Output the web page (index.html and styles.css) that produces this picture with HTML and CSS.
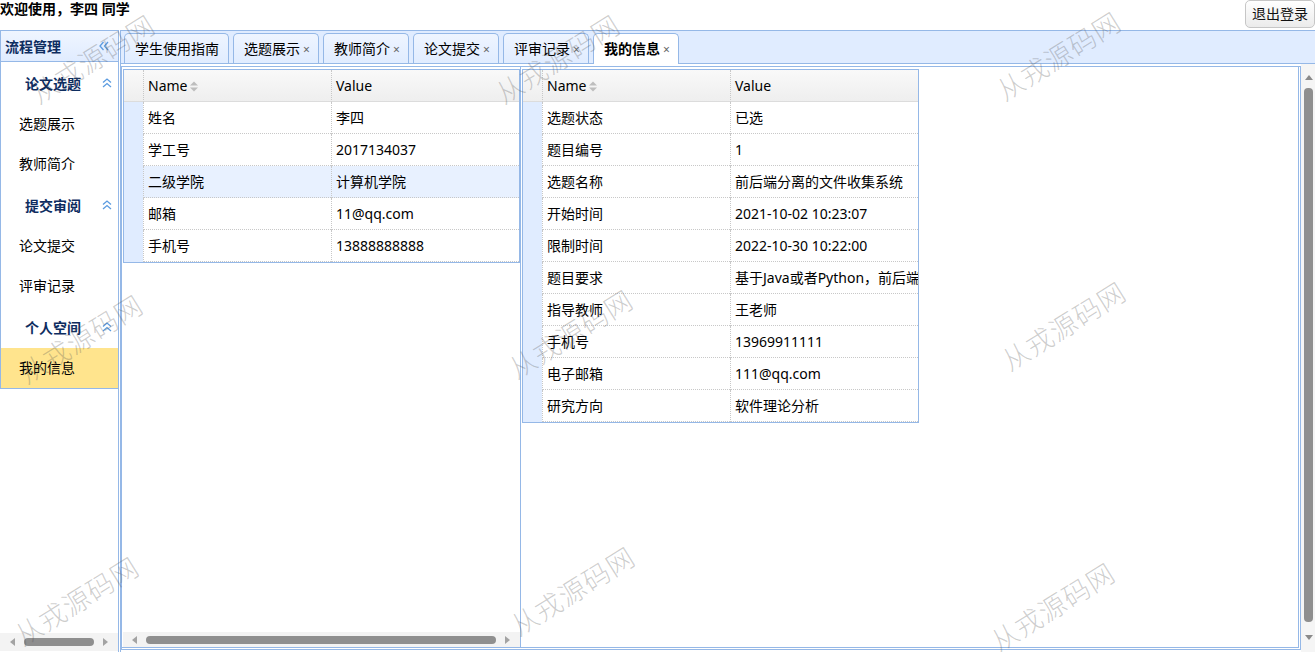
FILE: index.html
```html
<!DOCTYPE html>
<html lang="zh-CN">
<head>
<meta charset="utf-8">
<title>我的信息</title>
<link rel="stylesheet" href="styles.css">
</head>
<body>
<div class="page">
  <header class="topbar">
    <span class="welcome">欢迎使用，李四 同学</span>
    <button class="logout" type="button">退出登录</button>
  </header>
  <main class="main">
    <aside class="west">
      <div class="west-head">
        <span class="west-title">流程管理</span>
        <svg class="chev" width="10" height="10" viewBox="0 0 10 10"><polyline points="4.5,1 1,5 4.5,9" /><polyline points="9,1 5.5,5 9,9" /></svg>
      </div>
      <div class="west-body">
        <div class="accordion">
          <div class="acc-group">
            <div class="acc-head"><span>论文选题</span><svg class="chev" width="10" height="10" viewBox="0 0 10 10"><polyline points="1,4.5 5,1 9,4.5" /><polyline points="1,9 5,5.5 9,9" /></svg></div>
            <div class="acc-item">选题展示</div>
            <div class="acc-item">教师简介</div>
          </div>
          <div class="acc-group">
            <div class="acc-head"><span>提交审阅</span><svg class="chev" width="10" height="10" viewBox="0 0 10 10"><polyline points="1,4.5 5,1 9,4.5" /><polyline points="1,9 5,5.5 9,9" /></svg></div>
            <div class="acc-item">论文提交</div>
            <div class="acc-item">评审记录</div>
          </div>
          <div class="acc-group">
            <div class="acc-head"><span>个人空间</span><svg class="chev" width="10" height="10" viewBox="0 0 10 10"><polyline points="1,4.5 5,1 9,4.5" /><polyline points="1,9 5,5.5 9,9" /></svg></div>
            <div class="acc-item active">我的信息</div>
          </div>
        </div>
        <div class="hscroll west-scroll">
          <svg class="arr" width="5" height="8" viewBox="0 0 5 8"><polygon points="5,0 0,4 5,8" /></svg>
          <div class="thumb-h"></div>
          <svg class="arr" width="5" height="8" viewBox="0 0 5 8"><polygon points="0,0 5,4 0,8" /></svg>
        </div>
      </div>
    </aside>
    <section class="center">
      <nav class="tabs">
        <div class="tab">学生使用指南</div>
        <div class="tab closable">选题展示<span class="x">×</span></div>
        <div class="tab closable">教师简介<span class="x">×</span></div>
        <div class="tab closable">论文提交<span class="x">×</span></div>
        <div class="tab closable">评审记录<span class="x">×</span></div>
        <div class="tab closable selected">我的信息<span class="x">×</span></div>
      </nav>
      <div class="tab-body">
        <div class="frame">
          <div class="layout">
            <div class="pane pane-west">
              <div class="grid">
                <div class="grow ghead"><div class="rn"></div><div class="gc">Name<svg class="sort" width="8" height="11" viewBox="0 0 8 11"><polygon points="0,4.5 4,0.5 8,4.5" /><polygon points="0,6.5 8,6.5 4,10.5" /></svg></div><div class="gc">Value</div></div>
                <div class="grow"><div class="rn"></div><div class="gc">姓名</div><div class="gc">李四</div></div>
                <div class="grow"><div class="rn"></div><div class="gc">学工号</div><div class="gc">2017134037</div></div>
                <div class="grow hl"><div class="rn"></div><div class="gc">二级学院</div><div class="gc">计算机学院</div></div>
                <div class="grow"><div class="rn"></div><div class="gc">邮箱</div><div class="gc">11@qq.com</div></div>
                <div class="grow"><div class="rn"></div><div class="gc">手机号</div><div class="gc">13888888888</div></div>
              </div>
              <div class="hscroll pane-scroll">
                <svg class="arr" width="5" height="8" viewBox="0 0 5 8"><polygon points="5,0 0,4 5,8" /></svg>
                <div class="thumb-h"></div>
                <svg class="arr" width="5" height="8" viewBox="0 0 5 8"><polygon points="0,0 5,4 0,8" /></svg>
              </div>
            </div>
            <div class="pane pane-center">
              <div class="grid">
                <div class="grow ghead"><div class="rn"></div><div class="gc">Name<svg class="sort" width="8" height="11" viewBox="0 0 8 11"><polygon points="0,4.5 4,0.5 8,4.5" /><polygon points="0,6.5 8,6.5 4,10.5" /></svg></div><div class="gc">Value</div></div>
                <div class="grow"><div class="rn"></div><div class="gc">选题状态</div><div class="gc">已选</div></div>
                <div class="grow"><div class="rn"></div><div class="gc">题目编号</div><div class="gc">1</div></div>
                <div class="grow"><div class="rn"></div><div class="gc">选题名称</div><div class="gc">前后端分离的文件收集系统</div></div>
                <div class="grow"><div class="rn"></div><div class="gc">开始时间</div><div class="gc">2021-10-02 10:23:07</div></div>
                <div class="grow"><div class="rn"></div><div class="gc">限制时间</div><div class="gc">2022-10-30 10:22:00</div></div>
                <div class="grow"><div class="rn"></div><div class="gc">题目要求</div><div class="gc">基于Java或者Python，前后端分离的文件收集系统</div></div>
                <div class="grow"><div class="rn"></div><div class="gc">指导教师</div><div class="gc">王老师</div></div>
                <div class="grow"><div class="rn"></div><div class="gc">手机号</div><div class="gc">13969911111</div></div>
                <div class="grow"><div class="rn"></div><div class="gc">电子邮箱</div><div class="gc">111@qq.com</div></div>
                <div class="grow"><div class="rn"></div><div class="gc">研究方向</div><div class="gc">软件理论分析</div></div>
              </div>
            </div>
          </div>
        </div>
        <div class="vscroll">
          <svg class="arr" width="8" height="5" viewBox="0 0 8 5"><polygon points="0,5 4,0 8,5" /></svg>
          <div class="thumb-v"></div>
          <svg class="arr" width="8" height="5" viewBox="0 0 8 5"><polygon points="0,0 8,0 4,5" /></svg>
        </div>
      </div>
    </section>
  </main>
  <div class="watermarks" aria-hidden="true">
    <span class="wm wm1">从戎源码网</span>
    <span class="wm wm2">从戎源码网</span>
    <span class="wm wm3">从戎源码网</span>
    <span class="wm wm4">从戎源码网</span>
    <span class="wm wm5">从戎源码网</span>
    <span class="wm wm6">从戎源码网</span>
    <span class="wm wm7">从戎源码网</span>
    <span class="wm wm8">从戎源码网</span>
    <span class="wm wm9">从戎源码网</span>
  </div>
</div>
</body>
</html>
```
FILE: styles.css
```css
* { box-sizing: border-box; }
html, body { margin: 0; padding: 0; }
body {
  font-family: "Noto Sans", "Noto Sans CJK SC", sans-serif;
  font-size: 14px;
  color: #000;
  background: #fff;
  width: 1315px;
  height: 652px;
  overflow: hidden;
}
.page { position: relative; height: 652px; display: flex; flex-direction: column; }

/* top bar */
.topbar { height: 30px; display: flex; justify-content: space-between; align-items: flex-start; }
.welcome { font-weight: bold; line-height: 17px; }
.logout {
  height: 28px;
  padding: 0 6px;
  margin: 0;
  border: 1px solid #c6c6c6;
  border-radius: 5px;
  background: linear-gradient(#ffffff, #ebebeb);
  font-family: inherit;
  font-size: 14px;
  color: #111;
  line-height: 26px;
}

.main { flex: 1; display: flex; gap: 1px; min-height: 0; }

/* west region */
.west { width: 119px; display: flex; flex-direction: column; }
.west-head {
  height: 32px;
  border: 1px solid #95B8E7;
  background: linear-gradient(#EFF5FF, #E0ECFF);
  display: flex;
  align-items: center;
  justify-content: space-between;
  padding: 0 9px 0 4px;
}
.west-title { font-weight: bold; color: #0E2D5F; }
.chev { fill: none; stroke: #5b9be0; stroke-width: 1.3; }
.west-body { flex: 1; display: flex; flex-direction: column; border-right: 1px solid #95B8E7; }
.accordion { border-left: 1px solid #95B8E7; border-bottom: 1px solid #95B8E7; }
.acc-head {
  height: 42px;
  display: flex;
  align-items: center;
  justify-content: space-between;
  padding: 0 6px 0 24px;
  font-weight: bold;
  color: #0E2D5F;
}
.acc-item { height: 40px; line-height: 40px; padding-left: 18px; }
.acc-item.active { background: #FFE48D; }

/* scrollbars */
.hscroll { display: flex; align-items: center; background: #f3f3f3; margin-top: auto; }
.arr { fill: #a3a3a3; flex: none; }
.thumb-h { flex: 1; height: 8px; border-radius: 4px; background: #8f8f8f; }
.west-scroll { height: 18px; padding: 0 10px; gap: 9px; margin-bottom: 1px; }
.pane-scroll { height: 15px; padding: 0 10px 0 9px; gap: 9px; }

/* center region */
.center { flex: 1; display: flex; flex-direction: column; min-width: 0; }
.tabs {
  height: 34px;
  border: 1px solid #95B8E7;
  border-right: none;
  background: #E0ECFF;
  display: flex;
  align-items: flex-end;
  gap: 4px;
  padding: 2px 0 0 3px;
}
.tab {
  height: 30px;
  line-height: 29px;
  padding: 0 9px 0 10px;
  border: 1px solid #95B8E7;
  border-bottom: none;
  border-radius: 5px 5px 0 0;
  background: linear-gradient(#EFF5FF, #E0ECFF);
  white-space: nowrap;
  color: #000;
}
.tab .x { display: inline-block; width: 6px; margin-left: 3px; font-size: 12px; color: #666; }
.tab.selected { background: #fff; font-weight: bold; height: 31px; margin-bottom: -1px; position: relative; }
.tab.selected .x { font-weight: normal; }

.tab-body { flex: 1; display: flex; border-left: 1px solid #95B8E7; min-height: 0; }
.frame { flex: 1; display: flex; padding: 2px 0 2px 0; }
.layout { flex: 1; display: flex; border: 1px solid #95B8E7; padding-bottom: 1px; }
.pane { display: flex; flex-direction: column; padding: 2px 0 0 1px; border-bottom: 1px solid #95B8E7; }
.pane-west { width: 399px; border-right: 1px solid #95B8E7; }
.pane-center { flex: 1; border-right: 1px solid #95B8E7; margin-right: 1px; }

.vscroll {
  width: 14px;
  background: #f5f5f5;
  display: flex;
  flex-direction: column;
  align-items: center;
  padding: 11px 0 12px 1px;
}
.vscroll .arr { fill: #8a8a8a; }
.thumb-v { flex: 1; width: 9px; border-radius: 4px; background: #8f8f8f; margin: 8px 0 13px; }

/* property grid */
.grid { width: 397px; border: 1px solid #95B8E7; }
.grow { display: grid; grid-template-columns: 19px 188px 188px; height: 32px; }
.rn { background: #E0ECFF; }
.gc {
  border-left: 1px dotted #c8c8c8;
  border-bottom: 1px dotted #c8c8c8;
  padding-left: 4px;
  line-height: 31px;
  white-space: nowrap;
  overflow: hidden;
}
.ghead { background: linear-gradient(#F9F9F9, #EEEEEE); }
.ghead .rn { background: transparent; border-bottom: 1px solid #dcdcdc; }
.ghead .gc { border-bottom: 1px solid #dcdcdc; }
.sort { fill: #bdbdbd; margin-left: 3px; vertical-align: -1px; }
.grow.hl .gc { background: #E8F1FF; }

/* watermark overlay */
.watermarks { position: absolute; inset: 0; pointer-events: none; }
.wm {
  position: absolute;
  white-space: nowrap;
  font-family: "Noto Sans CJK SC", sans-serif;
  font-size: 27px;
  font-weight: 200;
  letter-spacing: 1px;
  color: rgba(80, 80, 80, 0.28);
  transform: translate(-50%, -50%) rotate(-32deg);
}
.wm1 { left: 92px; top: 58px; }
.wm2 { left: 557px; top: 58px; }
.wm3 { left: 1058px; top: 55px; }
.wm4 { left: 80px; top: 338px; }
.wm5 { left: 570px; top: 333px; }
.wm6 { left: 1063px; top: 325px; }
.wm7 { left: 76px; top: 600px; }
.wm8 { left: 572px; top: 590px; }
.wm9 { left: 1052px; top: 606px; }
```
